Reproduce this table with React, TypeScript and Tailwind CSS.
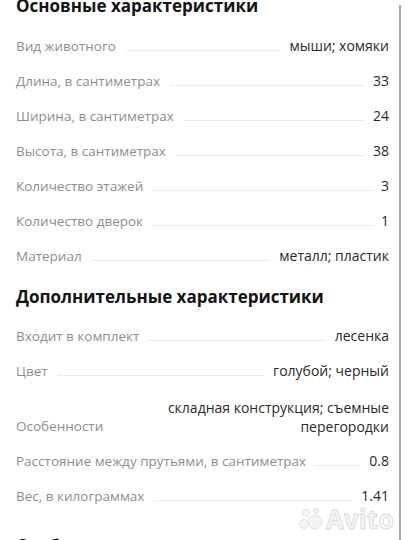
import React from "react";

type Row = { label: string; value: React.ReactNode };

const main: Row[] = [
  { label: "Вид животного", value: "мыши; хомяки" },
  { label: "Длина, в сантиметрах", value: "33" },
  { label: "Ширина, в сантиметрах", value: "24" },
  { label: "Высота, в сантиметрах", value: "38" },
  { label: "Количество этажей", value: "3" },
  { label: "Количество дверок", value: "1" },
  { label: "Материал", value: "металл; пластик" },
];

function Line({ r }: { r: Row }) {
  return (
    <div className="flex items-end">
      <span className="text-[13.5px] leading-5 text-[#8e8e8e] whitespace-nowrap">{r.label}</span>
      <span className="flex-1 mx-[10px] mb-[5px] border-b border-dotted border-[#d6d6d6] min-w-[16px]" />
      <span className="text-[14px] leading-5 text-[#2a2a2a] text-right whitespace-nowrap">{r.value}</span>
    </div>
  );
}

export default function App() {
  return (
    <div
      className="relative w-[405px] h-[540px] overflow-hidden bg-white"
      style={{ fontFamily: '"Open Sans", "Noto Sans", sans-serif' }}
    >
      <div className="pl-4 pr-4 mt-[-6px] flex flex-col">
        <h2 className="text-[17px] leading-6 font-bold text-[#141414]">Основные характеристики</h2>
        <div className="mt-[18px] flex flex-col gap-[15px]">
          {main.map((r) => (
            <Line key={r.label} r={r} />
          ))}
        </div>
        <h2 className="mt-[19px] text-[17px] leading-6 font-bold text-[#141414]">Дополнительные характеристики</h2>
        <div className="mt-[17px] flex flex-col gap-[15px]">
          <Line r={{ label: "Входит в комплект", value: "лесенка" }} />
          <Line r={{ label: "Цвет", value: "голубой; черный" }} />
          <div className="flex items-end mt-[2px]">
            <span className="text-[13.5px] leading-5 text-[#8e8e8e] whitespace-nowrap">Особенности</span>
            <span className="flex-1" />
            <span className="text-[14px] leading-[19px] text-[#2a2a2a] text-right">
              складная конструкция; съемные
              <br />
              перегородки
            </span>
          </div>
          <Line r={{ label: "Расстояние между прутьями, в сантиметрах", value: "0.8" }} />
          <Line r={{ label: "Вес, в килограммах", value: "1.41" }} />
        </div>
        <h2 className="mt-[28px] text-[17px] leading-6 font-bold text-[#141414]">Особенности</h2>
      </div>

      {/* scrollbar */}
      <div className="absolute right-[4px] top-[5px] bottom-0 w-[2px] bg-[#a9a9a9]" />

      {/* watermark */}
      <div className="absolute left-[298px] top-[506px] flex items-center gap-[2px] opacity-90">
        <svg width="26" height="24" viewBox="0 0 26 24">
          <g fill="#f3f3f3" stroke="#d8d8d8" strokeWidth="0.8">
            <circle cx="17" cy="15" r="7" />
            <circle cx="6" cy="17" r="4.5" />
            <circle cx="8" cy="6" r="3.5" />
            <circle cx="18" cy="4" r="2.5" />
          </g>
        </svg>
        <span
          className="text-[26px] leading-none font-bold text-[#f4f4f4]"
          style={{ WebkitTextStroke: "0.8px #d6d6d6" }}
        >
          Avito
        </span>
      </div>
    </div>
  );
}
